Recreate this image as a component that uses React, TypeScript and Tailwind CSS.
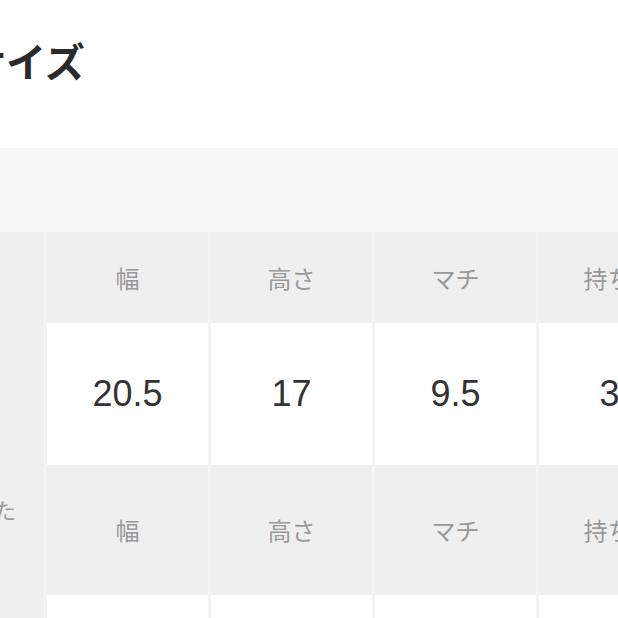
import React from "react";

const jp = { fontFamily: '"Noto Sans CJK JP", "Noto Sans", sans-serif' };
const num = { fontFamily: '"Liberation Sans", Arial, sans-serif' };

const heads = ["幅", "高さ", "マチ", "持ち手"];
const vals = ["20.5", "17", "9.5", "35"];

function HeadRow({ h, label }: { h: string; label?: string }) {
  return (
    <div className={`flex gap-[3px] ${h}`}>
      <div className="w-[44px] shrink-0 bg-[#efefef] flex justify-end items-center pr-[28px] pb-[42px]">
        {label ? (
          <span className="text-[22px] text-[#9a9a9a] whitespace-nowrap leading-none" style={jp}>
            {label}
          </span>
        ) : null}
      </div>
      {heads.map((t) => (
        <div
          key={t}
          className="w-[161px] shrink-0 bg-[#efefef] flex items-center justify-center text-[24px] text-[#999999] whitespace-nowrap"
          style={jp}
        >
          {t}
        </div>
      ))}
    </div>
  );
}

function DataRow({ h }: { h: string }) {
  return (
    <div className={`flex gap-[3px] ${h}`}>
      <div className="w-[44px] shrink-0 bg-[#efefef]" />
      {vals.map((v, i) => (
        <div
          key={i}
          className="w-[161px] shrink-0 bg-white flex items-center justify-center text-[36px] text-[#333333]"
          style={num}
        >
          {v}
        </div>
      ))}
    </div>
  );
}

export default function App() {
  return (
    <div className="w-[618px] h-[618px] bg-white overflow-hidden">
      <div className="h-[148px] pt-[40px]">
        <div className="ml-[-34px] text-[40px] font-bold text-[#2a2a2a] leading-none whitespace-nowrap" style={jp}>
          サイズ
        </div>
      </div>
      <div className="h-[84px] bg-[#f7f7f7]" />
      <div className="bg-[#f3f3f3] w-[700px]">
        <HeadRow h="h-[91px]" />
        <DataRow h="h-[142px]" />
        <HeadRow h="h-[130px]" label="きた" />
        <DataRow h="h-[140px]" />
      </div>
    </div>
  );
}
